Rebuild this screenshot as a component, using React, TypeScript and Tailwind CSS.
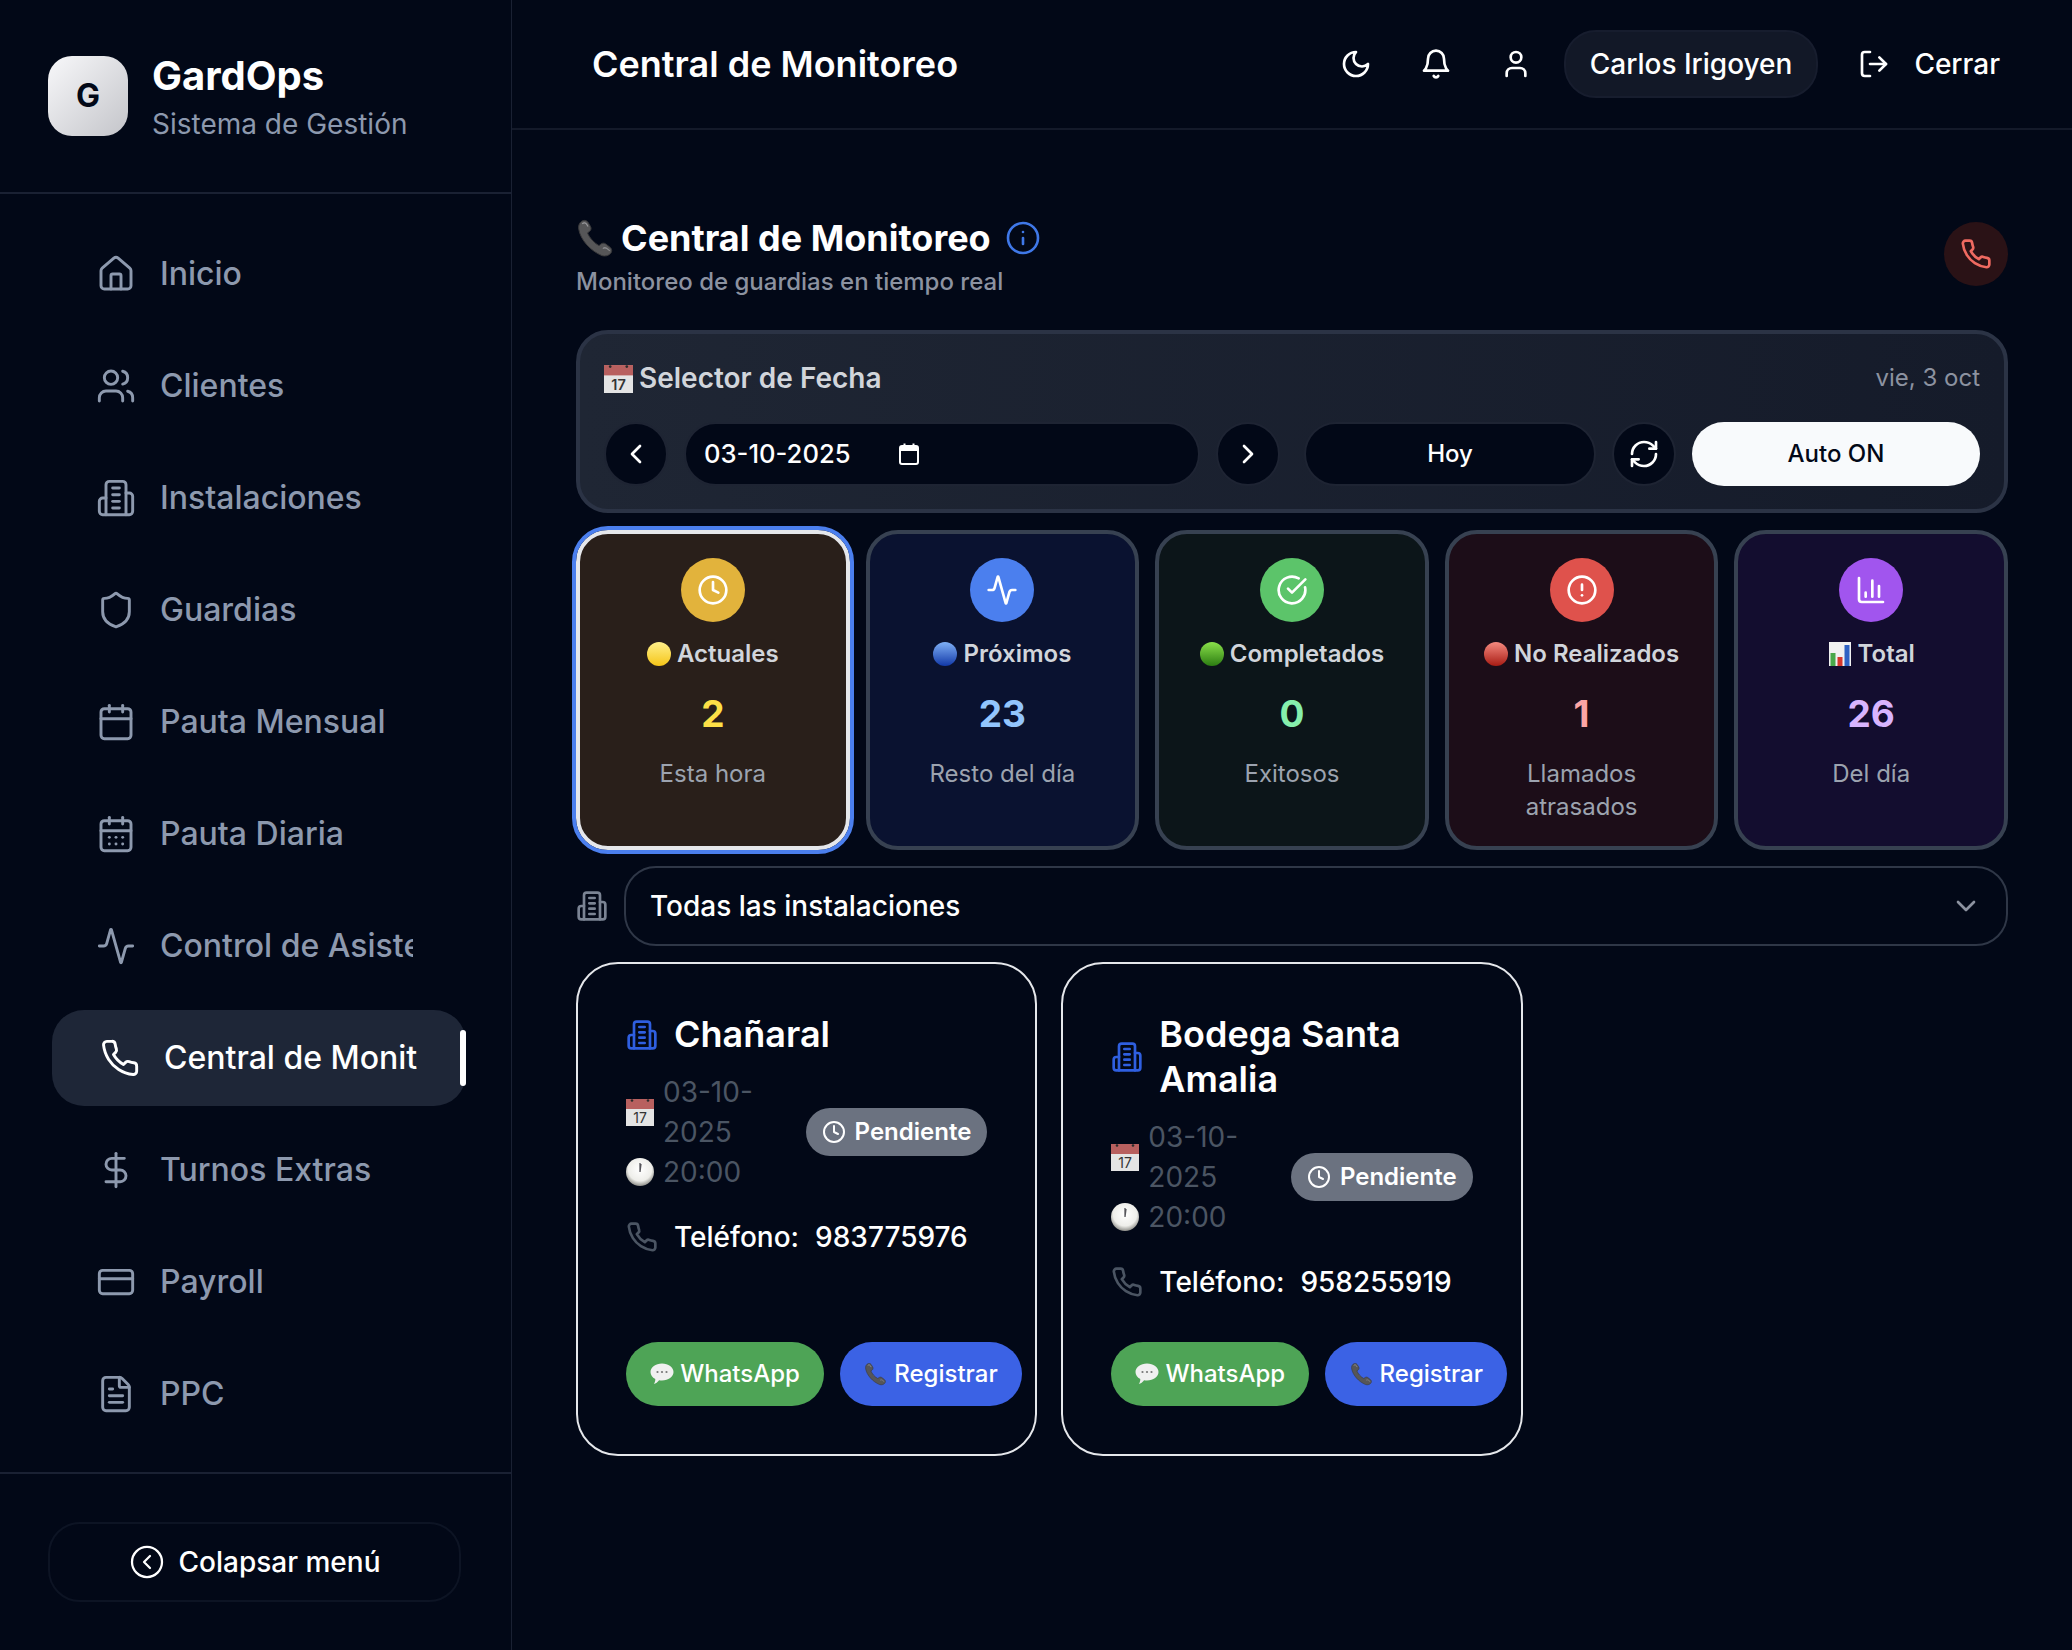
import {
  Activity,
  Calendar,
  CalendarDays,
  ChartColumn,
  ChevronDown,
  ChevronLeft,
  ChevronRight,
  CircleAlert,
  CircleCheckBig,
  CircleChevronLeft,
  Clock,
  CreditCard,
  DollarSign,
  FileText,
  House,
  Info,
  LogOut,
  RefreshCw,
  Shield,
  User,
  Users,
} from "lucide-react";
import type { ReactNode } from "react";

type IconProps = { size?: number; strokeWidth?: number; className?: string };

// older lucide shapes, the installed package has redrawn these
function Building({ size = 24, strokeWidth = 2, className }: IconProps) {
  return (
    <svg width={size} height={size} viewBox="0 0 24 24" fill="none" stroke="currentColor" strokeWidth={strokeWidth} strokeLinecap="round" strokeLinejoin="round" className={className}>
      <path d="M6 22V4a2 2 0 0 1 2-2h8a2 2 0 0 1 2 2v18Z" />
      <path d="M6 12H4a2 2 0 0 0-2 2v6a2 2 0 0 0 2 2h2" />
      <path d="M18 9h2a2 2 0 0 1 2 2v9a2 2 0 0 1-2 2h-2" />
      <path d="M10 6h4" />
      <path d="M10 10h4" />
      <path d="M10 14h4" />
      <path d="M10 18h4" />
    </svg>
  );
}

function Phone({ size = 24, strokeWidth = 2, className }: IconProps) {
  return (
    <svg width={size} height={size} viewBox="0 0 24 24" fill="none" stroke="currentColor" strokeWidth={strokeWidth} strokeLinecap="round" strokeLinejoin="round" className={className}>
      <path d="M22 16.920v3a2 2 0 0 1-2.180 2 19.790 19.790 0 0 1-8.630-3.070 19.500 19.500 0 0 1-6-6 19.790 19.790 0 0 1-3.070-8.670A2 2 0 0 1 4.110 2h3a2 2 0 0 1 2 1.720 12.840 12.840 0 0 0 .7 2.810 2 2 0 0 1-.45 2.110L8.090 9.910a16 16 0 0 0 6 6l1.270-1.270a2 2 0 0 1 2.110-.45 12.840 12.840 0 0 0 2.810.7A2 2 0 0 1 22 16.920z" />
    </svg>
  );
}

function Bell({ size = 24, strokeWidth = 2, className }: IconProps) {
  return (
    <svg width={size} height={size} viewBox="0 0 24 24" fill="none" stroke="currentColor" strokeWidth={strokeWidth} strokeLinecap="round" strokeLinejoin="round" className={className}>
      <path d="M6 8a6 6 0 0 1 12 0c0 7 3 9 3 9H3s3-2 3-9" />
      <path d="M10.300 21a1.940 1.940 0 0 0 3.400 0" />
    </svg>
  );
}

function Moon({ size = 24, strokeWidth = 2, className }: IconProps) {
  return (
    <svg width={size} height={size} viewBox="0 0 24 24" fill="none" stroke="currentColor" strokeWidth={strokeWidth} strokeLinecap="round" strokeLinejoin="round" className={className}>
      <path d="M12 3a6 6 0 0 0 9 9 9 9 0 1 1-9-9Z" />
    </svg>
  );
}

// the browser's own date picker glyph
function PickerIcon() {
  return (
    <svg width="20" height="22" viewBox="0 0 20 22" className="shrink-0 text-white">
      <rect x="1" y="3" width="18" height="18" rx="2" fill="none" stroke="currentColor" strokeWidth="2" />
      <rect x="1" y="3" width="18" height="5" fill="currentColor" />
      <rect x="4.500" y="0.500" width="2" height="4" fill="currentColor" />
      <rect x="13.500" y="0.500" width="2" height="4" fill="currentColor" />
    </svg>
  );
}

// Emoji are drawn, the machine has no colour emoji font
function PhoneEmoji({ size = 28 }: { size?: number }) {
  return (
    <svg width={size} height={size} viewBox="0 0 32 32" className="shrink-0">
      <path d="M4 3c2-1.600 4.400-1.400 5.600.4l2 3.400c.8 1.400.5 2.900-.8 3.900l-1.600 1.200c1.400 3.600 5 7.800 9.200 10.200l1.600-1.300c1.200-.9 2.700-.9 3.800 0l3.400 2.600c1.700 1.400 1.800 3.700.2 5.200-1.600 1.600-4 2.200-6.600 1.500C11.600 26.400 3.600 17.400 2.200 9 1.800 6.600 2.400 4.400 4 3Z" fill="#565658" stroke="#39393b" strokeWidth="0.8" />
      <path d="M5 4.500c1.200-.9 2.600-.8 3.400.3l1.200 2" fill="none" stroke="#9a9a9d" strokeWidth="1" />
      <path d="M21.500 24.500c1-.9 2-.9 3-.2l2.600 2" fill="none" stroke="#8a8a8d" strokeWidth="1" />
    </svg>
  );
}

function CalendarEmoji({ size = 28 }: { size?: number }) {
  return (
    <svg width={size} height={size} viewBox="0 0 28 28" className="shrink-0">
      <rect x="0" y="1" width="28" height="27" fill="#e4e4e4" />
      <rect x="0" y="1" width="28" height="10" fill="#b8605f" />
      <circle cx="6" cy="2.500" r="1.300" fill="#2b2b2b" />
      <circle cx="22" cy="2.500" r="1.300" fill="#2b2b2b" />
      <text x="14" y="25" textAnchor="middle" fontFamily="Inter, sans-serif" fontSize="14" fill="#333">17</text>
    </svg>
  );
}

function ClockEmoji({ size = 28 }: { size?: number }) {
  return (
    <svg width={size} height={size} viewBox="0 0 28 28" className="shrink-0">
      <defs>
        <radialGradient id="clockFace" cx="50%" cy="40%" r="60%">
          <stop offset="0%" stopColor="#ffffff" />
          <stop offset="70%" stopColor="#eeeeea" />
          <stop offset="100%" stopColor="#8f8f8a" />
        </radialGradient>
      </defs>
      <circle cx="14" cy="14" r="14" fill="url(#clockFace)" />
      <path d="M14 14 15 6M14 14V5" stroke="#55555a" strokeWidth="1.300" />
    </svg>
  );
}

function Dot({ from, to, id }: { from: string; to: string; id: string }) {
  return (
    <svg width="24" height="24" viewBox="0 0 24 24" className="shrink-0">
      <defs>
        <linearGradient id={id} x1="0" y1="0" x2="0" y2="1">
          <stop offset="0%" stopColor={from} />
          <stop offset="100%" stopColor={to} />
        </linearGradient>
      </defs>
      <circle cx="12" cy="12" r="12" fill={`url(#${id})`} />
    </svg>
  );
}

function ChartEmoji() {
  return (
    <svg width="24" height="24" viewBox="0 0 24 24" className="shrink-0">
      <rect x="1" y="0" width="22" height="24" fill="#f1f1f1" />
      <rect x="2.500" y="11" width="5" height="13" fill="#4aa84a" />
      <rect x="9.500" y="15" width="5" height="9" fill="#d6372c" />
      <rect x="16.500" y="3" width="5" height="21" fill="#2f62c4" />
    </svg>
  );
}

function BubbleEmoji() {
  return (
    <svg width="24" height="24" viewBox="0 0 24 24" className="shrink-0">
      <path d="M12 1.500c6.400 0 11.500 3.800 11.500 8.500s-5.100 8.500-11.500 8.500c-1 0-2-.1-2.900-.3-1.300 1.800-3.400 3.300-5.300 3.800 1-1.300 1.500-3.100 1.500-5C2.300 15.500.500 12.900.500 10 .500 5.300 5.600 1.500 12 1.500Z" fill="#f0f0f0" />
      <circle cx="7.500" cy="10" r="1.100" fill="#777" />
      <circle cx="12" cy="10" r="1.100" fill="#777" />
      <circle cx="16.500" cy="10" r="1.100" fill="#777" />
    </svg>
  );
}

const navItems = [
  { label: "Inicio", icon: <House size={40} strokeWidth={1.75} /> },
  { label: "Clientes", icon: <Users size={40} strokeWidth={1.75} /> },
  { label: "Instalaciones", icon: <Building size={40} strokeWidth={1.75} /> },
  { label: "Guardias", icon: <Shield size={40} strokeWidth={1.75} /> },
  { label: "Pauta Mensual", icon: <Calendar size={40} strokeWidth={1.75} /> },
  { label: "Pauta Diaria", icon: <CalendarDays size={40} strokeWidth={1.75} /> },
  { label: "Control de Asistencia", icon: <Activity size={40} strokeWidth={1.75} /> },
  { label: "Central de Monitoreo", icon: <Phone size={40} strokeWidth={1.75} />, active: true },
  { label: "Turnos Extras", icon: <DollarSign size={40} strokeWidth={1.75} /> },
  { label: "Payroll", icon: <CreditCard size={40} strokeWidth={1.75} /> },
  { label: "PPC", icon: <FileText size={40} strokeWidth={1.75} /> },
];

function Sidebar() {
  return (
    <aside className="flex w-[512px] shrink-0 flex-col border-r border-[#1a2133]">
      <div className="flex h-[194px] items-center gap-6 border-b-2 border-[#1a2133] px-12">
        <div className="flex h-20 w-20 items-center justify-center rounded-3xl bg-gradient-to-br from-[#f8f8fa] to-[#c4c5ca] text-[32px] font-bold text-[#020817]">
          G
        </div>
        <div className="pt-1">
          <div className="text-[40px] leading-[48px] font-bold text-white">GardOps</div>
          <div className="mt-1 text-[28px] leading-[40px] text-[#8d99ae]">Sistema de Gestión</div>
        </div>
      </div>
      <nav className="flex flex-col gap-4 border-b-2 border-[#1a2133] pt-8 pr-[49px] pb-[30px] pl-12">
        {navItems.map((item) =>
          item.active ? (
            <div key={item.label} className="relative flex h-24 translate-x-1 items-center gap-6 rounded-[32px] bg-[#1e2637] pr-[49px] pl-12 text-white">
              <span className="shrink-0">{item.icon}</span>
              <span className="overflow-hidden text-[32px] font-medium whitespace-nowrap">{item.label}</span>
              <span className="absolute top-5 right-0 h-14 w-[6px] rounded-full bg-white" />
            </div>
          ) : (
            <div key={item.label} className="flex h-24 items-center gap-6 pr-[49px] pl-12 text-[#8d99ae]">
              <span className="shrink-0">{item.icon}</span>
              <span className="overflow-hidden text-[32px] font-medium whitespace-nowrap">{item.label}</span>
            </div>
          ),
        )}
      </nav>
      <div className="pt-12 pr-[50px] pl-12">
        <button className="flex h-20 w-full items-center justify-center gap-[14px] rounded-[32px] border-2 border-[#0d1424] text-[28px] font-medium text-white">
          <CircleChevronLeft size={36} strokeWidth={1.5} />
          Colapsar menú
        </button>
      </div>
    </aside>
  );
}

function Header() {
  return (
    <header className="flex h-[130px] items-center justify-between border-b-2 border-[#141a2a] pr-[72px] pl-20 text-white">
      <h1 className="text-[36px] font-semibold">Central de Monitoreo</h1>
      <div className="flex items-center">
        <Moon size={32} strokeWidth={2} className="mr-12" />
        <Bell size={32} strokeWidth={2} className="mr-12" />
        <User size={32} strokeWidth={2} className="mr-8" />
        <div className="flex h-[68px] items-center rounded-[32px] border-2 border-[#171d2e] bg-[#121827] px-6 text-[28px] font-medium">
          Carlos Irigoyen
        </div>
        <LogOut size={32} strokeWidth={2} className="mr-6 ml-10" />
        <span className="text-[28px] font-medium">Cerrar</span>
      </div>
    </header>
  );
}

function DateSelector() {
  return (
    <section className="mt-8 rounded-[32px] border-4 border-[#2b3345] bg-gradient-to-r from-[#1f2634] to-[#151b2a] px-6 pt-[25px] pb-[23px]">
      <div className="flex h-[38px] items-center justify-between">
        <div className="flex items-center gap-[6px] text-[28px] font-semibold text-[#d1d5db]">
          <CalendarEmoji size={29} />
          Selector de Fecha
        </div>
        <span className="text-[24px] text-[#8c92a0]">vie, 3 oct</span>
      </div>
      <div className="mt-[25px] flex gap-6">
        <div className="flex flex-1 gap-4">
          <button className="flex h-16 w-16 items-center justify-center rounded-full border-2 border-[#1e2433] bg-[#020817] text-white">
            <ChevronLeft size={32} />
          </button>
          <div className="flex h-16 flex-1 items-center gap-12 rounded-[32px] border-2 border-[#1e2433] bg-[#020817] pl-[18px] text-[25.6px] font-medium text-white">
            03-10-2025
            <PickerIcon />
          </div>
          <button className="flex h-16 w-16 items-center justify-center rounded-full border-2 border-[#1e2433] bg-[#020817] text-white">
            <ChevronRight size={32} />
          </button>
        </div>
        <div className="flex flex-1 gap-4">
          <button className="flex h-16 flex-1 items-center justify-center rounded-[32px] border-2 border-[#1e2433] bg-[#020817] text-[24px] font-medium text-white">
            Hoy
          </button>
          <button className="flex h-16 w-16 items-center justify-center rounded-full border-2 border-[#1e2433] bg-[#020817] text-white">
            <RefreshCw size={32} />
          </button>
          <button className="flex h-16 flex-1 items-center justify-center rounded-[32px] bg-[#f8fafc] text-[24px] font-medium text-[#020817]">
            Auto ON
          </button>
        </div>
      </div>
    </section>
  );
}

type Stat = {
  circle: string;
  card: string;
  value: string;
  valueColor: string;
  label: string;
  emoji: ReactNode;
  sub: string;
  icon: ReactNode;
  selected?: boolean;
};

const stats: Stat[] = [
  {
    circle: "bg-[#e2b33c]",
    card: "bg-[#291f1a]",
    valueColor: "text-[#fde047]",
    value: "2",
    label: "Actuales",
    emoji: <Dot id="dotY" from="#fff08a" to="#f5c518" />,
    sub: "Esta hora",
    icon: <Clock size={32} strokeWidth={2} />,
    selected: true,
  },
  {
    circle: "bg-[#4b7fee]",
    card: "bg-[#0a1230]",
    valueColor: "text-[#93c5fd]",
    value: "23",
    label: "Próximos",
    emoji: <Dot id="dotB" from="#7fb0f5" to="#1239a8" />,
    sub: "Resto del día",
    icon: <Activity size={32} strokeWidth={2} />,
  },
  {
    circle: "bg-[#5cc46a]",
    card: "bg-[#0c1519]",
    valueColor: "text-[#86efac]",
    value: "0",
    label: "Completados",
    emoji: <Dot id="dotG" from="#8ae04a" to="#2c7d12" />,
    sub: "Exitosos",
    icon: <CircleCheckBig size={32} strokeWidth={2} />,
  },
  {
    circle: "bg-[#df524c]",
    card: "bg-[#1c0d18]",
    valueColor: "text-[#fca5a5]",
    value: "1",
    label: "No Realizados",
    emoji: <Dot id="dotR" from="#f58a80" to="#a81c14" />,
    sub: "Llamados atrasados",
    icon: <CircleAlert size={32} strokeWidth={2} />,
  },
  {
    circle: "bg-[#a155ee]",
    card: "bg-[#130d2f]",
    valueColor: "text-[#d8b4fe]",
    value: "26",
    label: "Total",
    emoji: <ChartEmoji />,
    sub: "Del día",
    icon: <ChartColumn size={32} strokeWidth={2} />,
  },
];

function StatCard({ stat }: { stat: Stat }) {
  return (
    <div
      className={`flex h-80 flex-col items-center rounded-[32px] border-4 px-6 pt-6 text-center ${stat.card} ${
        stat.selected ? "border-[#e5e7eb] outline-4 outline-[#4b7fee]" : "border-[#374151]"
      }`}
    >
      <div className={`flex h-16 w-16 items-center justify-center rounded-full text-white ${stat.circle}`}>{stat.icon}</div>
      <div className="mt-4 flex h-8 items-center gap-[6px] text-[24px] font-semibold whitespace-nowrap text-[#d1d5db]">
        {stat.emoji}
        {stat.label}
      </div>
      <div className={`mt-5 text-[37px] leading-[48px] font-bold ${stat.valueColor}`}>{stat.value}</div>
      <div className="mt-[19px] text-[24px] leading-[33px] text-[#9ca3af]">{stat.sub}</div>
    </div>
  );
}

function InstallationCard({ name, phone }: { name: string; phone: string }) {
  return (
    <div className="flex flex-col rounded-[42px] border-2 border-[#e5e7eb] p-12">
      <div className="flex items-center gap-4 text-white">
        <Building size={32} strokeWidth={2} className="shrink-0 text-[#2f5fe0]" />
        <h3 className="text-[36px] leading-[45px] font-semibold">{name}</h3>
      </div>
      <div className="mt-[15px] flex items-center justify-between">
        <div className="text-[28px] leading-10 text-[#4b5563]">
          <div className="flex w-[130px] items-center gap-[9px]">
            <CalendarEmoji size={28} />
            <span>03-10-2025</span>
          </div>
          <div className="flex items-center gap-[9px]">
            <ClockEmoji size={28} />
            <span>20:00</span>
          </div>
        </div>
        <div className="flex h-12 items-center gap-[9px] rounded-full bg-[#6b7280] px-4 text-[24px] font-semibold text-white">
          <Clock size={24} strokeWidth={2} />
          Pendiente
        </div>
      </div>
      <div className="mt-[25px] flex h-10 items-center gap-4 text-[28px] font-medium text-white">
        <Phone size={32} strokeWidth={2} className="shrink-0 text-[#4b5563]" />
        <span>Teléfono:</span>
        <span>{phone}</span>
      </div>
      <div className="mt-auto flex gap-4 pt-10">
        <button className="flex h-16 w-[198px] shrink-0 items-center justify-center gap-[6px] rounded-[32px] bg-[#4ea456] text-[24px] font-medium text-white">
          <BubbleEmoji />
          WhatsApp
        </button>
        <button className="flex h-16 w-[182px] shrink-0 items-center justify-center gap-[6px] rounded-[32px] bg-[#3b62e5] text-[24px] font-medium text-white">
          <PhoneEmoji size={24} />
          Registrar
        </button>
      </div>
    </div>
  );
}

export default function App() {
  return (
    <div className="flex h-[1650px] w-[2072px] overflow-hidden bg-[#020817] font-['Inter',sans-serif]">
      <Sidebar />
      <main className="min-w-0 flex-1">
        <Header />
        <div className="px-16 pt-[84px]">
          <div className="flex items-start justify-between">
            <div>
              <div className="flex h-12 items-center">
                <PhoneEmoji size={40} />
                <h2 className="ml-[5px] text-[36px] font-bold text-white">Central de Monitoreo</h2>
                <Info size={36} strokeWidth={1.75} className="ml-[14px] text-[#3f78e8]" />
              </div>
              <p className="mt-1 text-[24px] leading-8 font-medium text-[#8c92a0]">Monitoreo de guardias en tiempo real</p>
            </div>
            <div className="mt-2 flex h-16 w-16 items-center justify-center rounded-full bg-[#2a1216] text-[#ef6a61]">
              <Phone size={32} strokeWidth={2} />
            </div>
          </div>
          <DateSelector />
          <div className="mt-[17px] grid grid-cols-5 gap-4">
            {stats.map((stat) => (
              <StatCard key={stat.label} stat={stat} />
            ))}
          </div>
          <div className="mt-[16px] flex items-center gap-4">
            <Building size={32} strokeWidth={2} className="shrink-0 text-[#7b8494]" />
            <div className="flex h-[80px] flex-1 items-center justify-between rounded-[32px] border-2 border-[#2f3747] pr-6 pl-6 text-[28px] font-medium text-white">
              Todas las instalaciones
              <ChevronDown size={32} className="text-[#8c92a0]" />
            </div>
          </div>
          <div className="mt-4 grid h-[494px] grid-cols-3 gap-6">
            <InstallationCard name="Chañaral" phone="983775976" />
            <InstallationCard name="Bodega Santa Amalia" phone="958255919" />
          </div>
        </div>
      </main>
    </div>
  );
}
